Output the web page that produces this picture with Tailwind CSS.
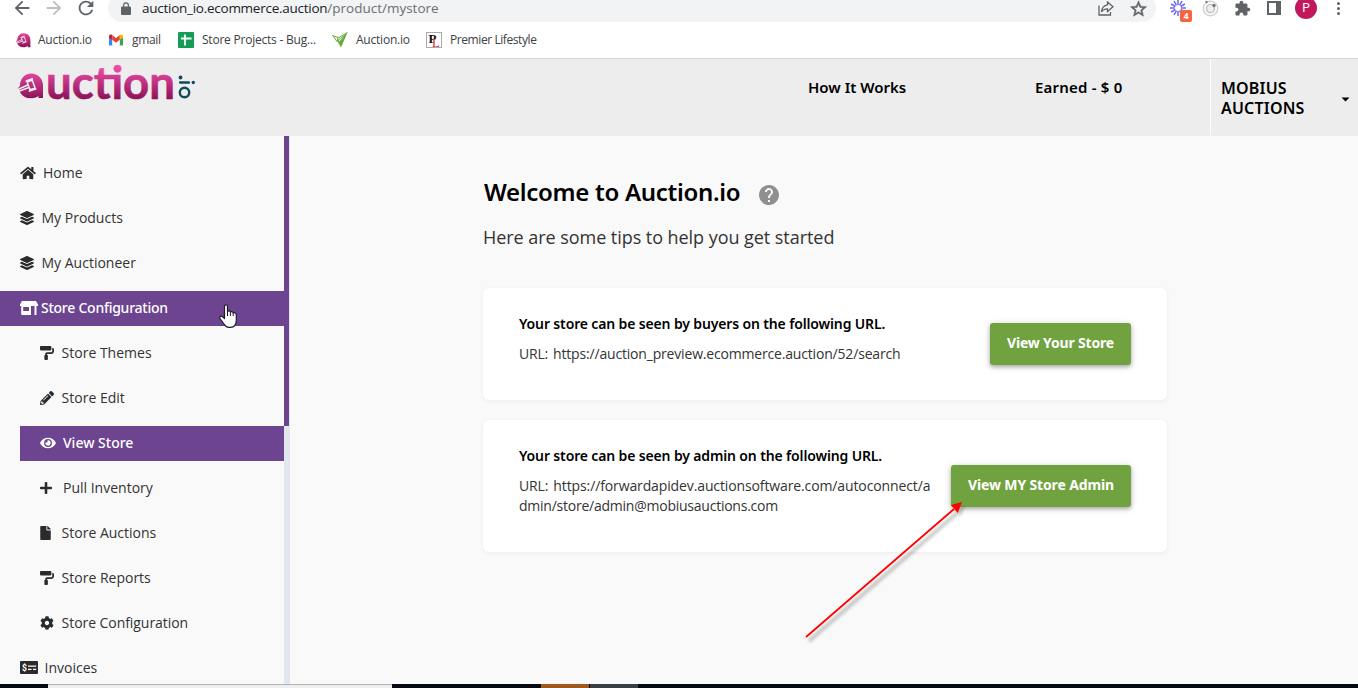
<!DOCTYPE html>
<html lang="en">
<head>
<meta charset="utf-8">
<title>Auction.io - My Store</title>
<script src="https://cdn.jsdelivr.net/npm/@tailwindcss/browser@4"></script>
</head>
<body class="relative flex h-[688px] w-[1358px] flex-col overflow-hidden bg-[#f9f9f9] font-['Open_Sans','Noto_Sans',sans-serif] text-sm text-[#333]">

<!-- shared icon shapes -->
<svg class="absolute size-0">
  <defs>
    <linearGradient id="pink" x1="0" y1="0" x2="0" y2="1"><stop offset="0" stop-color="#e2479d"/><stop offset="1" stop-color="#8c1358"/></linearGradient>
    <linearGradient id="pinkText" gradientUnits="userSpaceOnUse" x1="0" y1="66" x2="0" y2="99"><stop offset="0" stop-color="#f250ab"/><stop offset="1" stop-color="#8c1358"/></linearGradient>
  </defs>
  <symbol id="layers" viewBox="0 0 512 512"><path d="M12.41 148.02l232.94 105.67c6.8 3.09 14.49 3.09 21.29 0l232.94-105.67c16.55-7.51 16.55-32.52 0-40.03L266.65 2.31a25.607 25.607 0 0 0-21.29 0L12.41 107.98c-16.55 7.51-16.55 32.53 0 40.04zm487.18 88.28l-58.09-26.33-161.64 73.27c-7.56 3.43-15.59 5.17-23.86 5.17s-16.29-1.74-23.86-5.17L70.51 209.97l-58.1 26.33c-16.55 7.5-16.55 32.5 0 40l232.94 105.59c6.8 3.08 14.49 3.08 21.29 0L499.59 276.3c16.55-7.5 16.55-32.5 0-40zm0 127.8l-57.87-26.23-161.86 73.37c-7.56 3.43-15.59 5.17-23.86 5.17s-16.29-1.74-23.86-5.17L70.29 337.87 12.41 364.1c-16.55 7.5-16.55 32.5 0 40l232.94 105.59c6.8 3.08 14.49 3.08 21.29 0L499.59 404.1c16.55-7.5 16.55-32.5 0-40z"/></symbol>
  <symbol id="roller" viewBox="0 0 512 512"><path d="M416 128V32c0-17.67-14.33-32-32-32H32C14.33 0 0 14.33 0 32v96c0 17.67 14.33 32 32 32h352c17.67 0 32-14.33 32-32zm32-64v128c0 17.67-14.33 32-32 32H256c-35.35 0-64 28.65-64 64v32c-17.67 0-32 14.33-32 32v128c0 17.67 14.33 32 32 32h64c17.67 0 32-14.33 32-32V352c0-17.67-14.33-32-32-32v-32h160c53.02 0 96-42.98 96-96v-64c0-35.35-28.65-64-64-64z"/></symbol>
  <symbol id="mark" viewBox="0 0 28 26"><path fill="url(#pink)" d="M27 25.500H22.500V23.500C20.500 25 17.500 25.800 14.500 25.800C9 25.800 4.500 22.500 3.200 17.200L1.500 16.200L4 13.200C4 6 8.800 1 15 1C22 1 27 6 27 13Z"/><path fill="none" stroke="#ededed" stroke-width="1.500" d="M0.500 17.500L12.500 12.200M9.500 8.600L17 6M12.800 18.800L20.400 16.200M11.200 9.500L14 17.200L19 15.400L16.200 7.500ZM1.500 19.200L13 15"/></symbol>
</svg>

<!-- browser toolbar -->
<div class="h-[22px] shrink-0 bg-white">
  <div class="flex h-4 items-center">
    <div class="flex w-[108px] shrink-0 items-center pl-[11px]">
      <svg class="size-[22px] shrink-0 fill-[#5f6368]" viewBox="0 0 24 24"><path d="M20 11H7.830l5.590-5.590L12 4l-8 8 8 8 1.410-1.410L7.830 13H20v-2z"/></svg>
      <svg class="ml-2.5 size-[22px] shrink-0 -scale-x-100 fill-[#bdbfc1]" viewBox="0 0 24 24"><path d="M20 11H7.830l5.590-5.590L12 4l-8 8 8 8 1.410-1.410L7.830 13H20v-2z"/></svg>
      <svg class="ml-2.5 size-[22px] shrink-0 fill-[#5f6368]" viewBox="0 0 24 24"><path d="M17.650 6.350C16.200 4.900 14.210 4 12 4c-4.420 0-7.990 3.580-7.990 8s3.570 8 7.990 8c3.730 0 6.840-2.550 7.730-6h-2.080c-.82 2.330-3.040 4-5.650 4-3.310 0-6-2.690-6-6s2.690-6 6-6c1.660 0 3.140.69 4.220 1.780L13 11h7V4l-2.350 2.350z"/></svg>
    </div>
    <div class="flex h-7 w-[1048px] shrink-0 items-center rounded-full bg-[#f1f3f4] pr-0.5 pl-[13px]">
      <svg class="h-[13px] w-[10px] fill-[#5f6368]" viewBox="0 0 10 13"><path fill-rule="evenodd" d="M1 4.500H2V3.200a3 3 0 0 1 6 0V4.500H9a1 1 0 0 1 1 1V12a1 1 0 0 1-1 1H1a1 1 0 0 1-1-1V5.500a1 1 0 0 1 1-1zM3.200 4.500H6.800V3.200a1.800 1.800 0 0 0-3.600 0z"/></svg>
      <div class="ml-[11px] flex grow items-center pt-0.5 text-[13.500px] text-[#202124]"><span class="tracking-[-0.260px]">auction_io.ecommerce.auction</span><span class="tracking-[0px] text-[#6b6f73]">/product/mystore</span></div>
      <div class="flex w-8 justify-center"><svg class="h-[15px] w-4 fill-none stroke-[#5f6368] stroke-[1.300]" viewBox="0 0 16 15"><path d="M1 4.500V14H12.500V11M9.500 1L15 5.800L9.500 10.500V7.800C6.500 7.800 4.800 8.800 3.500 11C3.800 7 6 4.300 9.500 3.800Z"/></svg></div>
      <div class="flex w-8 justify-center"><svg class="size-[17px] fill-[#5f6368] stroke-[#5f6368] stroke-[0.600]" viewBox="1.500 1 21 21"><path d="M22 9.240l-7.190-.62L12 2 9.190 8.630 2 9.240l5.460 4.730L5.820 21 12 17.270 18.180 21l-1.630-7.030L22 9.240zM12 15.400l-3.760 2.270 1-4.280-3.320-2.880 4.380-.38L12 6.100l1.710 4.040 4.380.38-3.320 2.880 1 4.280L12 15.400z"/></svg></div>
    </div>
    <div class="ml-1.5 flex items-center">
      <div class="relative flex w-8 justify-center">
        <svg class="size-4 stroke-[#6b67f2] stroke-[1.500]" viewBox="-8 -8 16 16"><path d="M0-3V-8M0 3V8M-3 0H-8M3 0H8M2.600-1.500L6.900-4M-2.600-1.500L-6.900-4M-2.600 1.500L-6.900 4M2.600 1.500L6.900 4M1.500-2.600L4-6.900M-1.500-2.600L-4-6.900M-1.500 2.600L-4 6.900M1.500 2.600L4 6.900"/></svg>
        <span class="absolute top-[10px] left-[18px] flex h-3 w-3 items-center justify-center rounded-[2px] bg-[#fb6340] text-[9px] font-bold text-white">4</span>
      </div>
      <div class="flex w-8 justify-center"><svg class="size-[17px]" viewBox="0 0 17 17"><circle cx="8.500" cy="8.500" r="7.300" fill="#f7f7f7" stroke="#cfcfcf" stroke-width="1.200"/><circle cx="8.500" cy="8.500" r="4" fill="#eee" stroke="#bbb" stroke-width="1.200"/><circle cx="12" cy="5.500" r="1.700" fill="#777"/><circle cx="4.500" cy="2" r="1.300" fill="#888"/></svg></div>
      <div class="flex w-8 justify-center"><svg class="size-[17px] fill-[#5f6368]" viewBox="0 0 24 24"><path d="M20.500 11H19V7c0-1.100-.9-2-2-2h-4V3.500C13 2.120 11.880 1 10.500 1S8 2.120 8 3.500V5H4c-1.100 0-1.990.9-1.990 2v3.800H3.500c1.490 0 2.700 1.210 2.700 2.700s-1.210 2.700-2.700 2.700H2V20c0 1.100.9 2 2 2h3.800v-1.500c0-1.490 1.210-2.700 2.700-2.700 1.490 0 2.700 1.210 2.700 2.700V22H17c1.100 0 2-.9 2-2v-4h1.500c1.380 0 2.500-1.120 2.500-2.500S21.880 11 20.500 11z"/></svg></div>
      <div class="flex w-8 justify-center"><div class="h-[14px] w-[14px] border-2 border-r-[5px] border-[#5f6368]"></div></div>
      <div class="flex w-8 justify-center"><div class="flex size-[22px] items-center justify-center rounded-full bg-[#c2185b] font-['Roboto',sans-serif] text-xs text-white">P</div></div>
      <div class="flex w-8 flex-col items-center gap-[2px]"><i class="size-[3px] rounded-full bg-[#5f6368]"></i><i class="size-[3px] rounded-full bg-[#5f6368]"></i><i class="size-[3px] rounded-full bg-[#5f6368]"></i></div>
    </div>
  </div>
</div>

<!-- bookmarks bar -->
<div class="flex h-9 shrink-0 items-center bg-white pl-[15px] text-xs tracking-[-0.220px] whitespace-nowrap text-[#3c4043]">
  <div class="flex w-[93px] items-center gap-[7px]"><svg class="size-4 shrink-0"><use href="#mark"/></svg>Auction.io</div>
  <div class="flex w-[70px] items-center gap-2"><svg class="h-[12px] w-4 shrink-0" viewBox="0 0 16 12"><path fill="#4285f4" d="M1 2V11.500H4.200V5Z"/><path fill="#34a853" d="M15 2V11.500H11.800V5Z"/><path fill="#c5221f" d="M1 2.500C1 .8 2.800 0 4.200 1.100V5.800L1 3.400Z"/><path fill="#ea4335" d="M4.200 1.100L8 4L11.800 1.100V5.800L8 8.700L4.200 5.800Z"/><path fill="#fbbc04" d="M15 2.500C15 .8 13.200 0 11.800 1.100V5.800L15 3.400Z"/></svg><span class="tracking-[-0.350px]">gmail</span></div>
  <div class="flex w-[154px] items-center gap-2"><svg class="size-4 shrink-0" viewBox="0 0 16 16"><rect width="16" height="16" rx="1" fill="#159d58"/><path d="M3 6.500H13.500M7 2.500V13.500" stroke="#fff" stroke-width="1.800"/></svg>Store Projects - Bug...</div>
  <div class="flex w-[94px] items-center gap-2"><svg class="size-4 shrink-0" viewBox="0 0 16 16"><path fill="#6aaa3a" d="M15.500.5L9 15.500L5 8.500Z"/><path fill="#fff" d="M12 4.500L6.600 8.300L7.400 9.300Z"/><path fill="none" stroke="#6aaa3a" stroke-width="1" d="M.5 3.500L6 5.500L5 9.500L.8 3.700M6 6L15.500.5"/></svg>Auction.io</div>
  <div class="flex items-center gap-2 tracking-[-0.420px]"><svg class="size-4 shrink-0" viewBox="0 0 16 16"><rect x=".5" y=".5" width="15" height="15" fill="#fff" stroke="#aaa"/><text x="2.500" y="11" font-family="Liberation Serif" font-weight="700" font-size="13" fill="#111">P</text><text x="6" y="14.500" font-family="Liberation Serif" font-size="12.500" fill="#d8222c">L</text></svg>Premier Lifestyle</div>
</div>

<!-- site header -->
<header class="flex h-[78px] shrink-0 border-t border-[#d5d6d8] bg-[#ededed] font-['Noto_Sans',sans-serif] font-semibold text-black">
  <svg class="h-[50px] w-[200px] shrink-0 overflow-visible" viewBox="0 59 200 50">
    <use href="#mark" x="16" y="72.500" width="28" height="26"/>
    <text x="46" y="98.500" font-family="Lato" font-weight="700" font-size="45" textLength="129" lengthAdjust="spacingAndGlyphs" fill="url(#pinkText)" stroke="url(#pinkText)" stroke-width=".6">uction</text>
    <g fill="#0f4a60"><circle cx="180.500" cy="77.500" r="1.900"/><rect x="179" y="81.200" width="11" height="2.500" rx="1"/><circle cx="193.300" cy="82.500" r="1.700"/></g>
    <circle cx="184.500" cy="92.500" r="4.700" fill="none" stroke="#0f4a60" stroke-width="2.400"/>
  </svg>
  <div class="ml-[608px] w-[227px] pt-[18px] text-[15px] leading-5">How It Works</div>
  <div class="w-[175px] pt-[18px] text-[15px] leading-5 tracking-[0.200px]">Earned - $ 0</div>
  <div class="flex h-[76px] grow items-center border-l border-white pt-0.5 pl-[10px] text-base leading-5">
    <span class="w-[120px] tracking-[0.200px]">MOBIUS AUCTIONS</span>
    <svg class="mt-[3px] h-[5px] w-[9px]" viewBox="0 0 9 5"><path d="M.5 .5H8.500L4.500 4.500Z"/></svg>
  </div>
</header>

<div class="flex h-[548px] shrink-0">
  <!-- sidebar -->
  <nav class="flex w-[284px] shrink-0 flex-col gap-2.5 overflow-hidden pt-[20px] whitespace-nowrap">
    <a class="flex h-[35px] shrink-0 items-center pb-0.5 pl-5"><svg class="mr-[7px] h-[14px] w-4 fill-[#2b2b2b]" viewBox="0 0 576 512"><path d="M280.370 148.260L96 300.110V464a16 16 0 0 0 16 16l112.060-.29a16 16 0 0 0 15.920-16V368a16 16 0 0 1 16-16h64a16 16 0 0 1 16 16v95.640a16 16 0 0 0 16 16.050L464 480a16 16 0 0 0 16-16V300L295.670 148.260a12.190 12.190 0 0 0-15.300 0zM571.600 251.470L488 182.560V44.050a12 12 0 0 0-12-12h-56a12 12 0 0 0-12 12v72.610L318.470 43a48 48 0 0 0-61 0L4.340 251.470a12 12 0 0 0-1.600 16.900l25.500 31A12 12 0 0 0 45.150 301l235.220-193.740a12.190 12.190 0 0 1 15.300 0L530.900 301a12 12 0 0 0 16.900-1.600l25.500-31a12 12 0 0 0-1.700-16.930z"/></svg>Home</a>
    <a class="flex h-[35px] shrink-0 items-center pb-0.5 pl-5"><svg class="mr-[7.500px] size-[14px] fill-[#2b2b2b]"><use href="#layers"/></svg>My Products</a>
    <a class="flex h-[35px] shrink-0 items-center pb-0.5 pl-5"><svg class="mr-[7.500px] size-[14px] fill-[#2b2b2b]"><use href="#layers"/></svg>My Auctioneer</a>
    <a class="flex h-[35px] shrink-0 items-center bg-[#6c4490] pb-0.5 pl-5 font-['Noto_Sans',sans-serif] font-medium tracking-[-0.250px] text-white"><svg class="mr-[3px] h-[14px] w-[18px] fill-white" viewBox="0 0 18 14"><path fill-rule="evenodd" d="M2 0H16L18 3.500V5H0V3.500ZM1.200 5H11V14H2.200Q1.200 14 1.200 13ZM3.200 6V10H9V6ZM14.500 5H16.500V14H14.500Z"/></svg>Store Configuration</a>
    <a class="flex h-[35px] shrink-0 items-center pb-0.5 pl-10"><svg class="mr-[7.600px] size-[14px] fill-[#2b2b2b]"><use href="#roller"/></svg>Store Themes</a>
    <a class="flex h-[35px] shrink-0 items-center pb-0.5 pl-10"><svg class="mr-[7.600px] size-[14px] fill-[#2b2b2b]" viewBox="0 0 512 512"><path d="M497.900 142.100l-46.100 46.100c-4.700 4.700-12.300 4.700-17 0l-111-111c-4.700-4.700-4.700-12.300 0-17l46.100-46.100c18.700-18.700 49.100-18.700 67.900 0l60.100 60.100c18.800 18.700 18.800 49.100 0 67.900zM284.200 99.800L21.600 362.400.4 483.900c-2.900 16.400 11.400 30.600 27.800 27.800l121.500-21.300 262.600-262.600c4.700-4.700 4.700-12.300 0-17l-111-111c-4.800-4.700-12.400-4.700-17.100 0zM124.100 339.900c-5.500-5.500-5.500-14.300 0-19.800l154-154c5.500-5.500 14.300-5.500 19.800 0s5.500 14.300 0 19.800l-154 154c-5.500 5.500-14.300 5.500-19.800 0zM88 424h48v36.300l-64.500 11.300-31.100-31.100L51.700 376H88v48z"/></svg>Store Edit</a>
    <a class="ml-5 flex h-[35px] shrink-0 items-center bg-[#6c4490] pb-0.5 pl-5 font-['Noto_Sans',sans-serif] font-medium text-white"><svg class="mr-[7px] h-[14px] w-4 fill-white" viewBox="0 0 576 512"><path d="M572.520 241.400C518.290 135.590 410.930 64 288 64S57.680 135.640 3.480 241.410a32.350 32.350 0 0 0 0 29.190C57.710 376.410 165.070 448 288 448s230.320-71.640 284.520-177.410a32.350 32.350 0 0 0 0-29.190zM288 400a144 144 0 1 1 144-144 143.930 143.930 0 0 1-144 144zm0-240a95.310 95.310 0 0 0-25.310 3.790 47.850 47.850 0 0 1-66.900 66.900A95.780 95.780 0 1 0 288 160z"/></svg>View Store</a>
    <a class="flex h-[35px] shrink-0 items-center pb-0.5 pl-10"><svg class="mr-[11px] h-[14px] w-3 fill-[#2b2b2b]" viewBox="0 0 448 512"><path d="M416 208H272V64c0-17.670-14.330-32-32-32h-32c-17.670 0-32 14.330-32 32v144H32c-17.670 0-32 14.330-32 32v32c0 17.670 14.330 32 32 32h144v144c0 17.670 14.330 32 32 32h32c17.670 0 32-14.330 32-32V304h144c17.670 0 32-14.330 32-32v-32c0-17.670-14.330-32-32-32z"/></svg>Pull Inventory</a>
    <a class="flex h-[35px] shrink-0 items-center pb-0.5 pl-10"><svg class="mr-[10.600px] h-[14px] w-[11px] fill-[#2b2b2b]" viewBox="0 0 384 512"><path d="M224 136V0H24C10.700 0 0 10.700 0 24v464c0 13.300 10.700 24 24 24h336c13.300 0 24-10.700 24-24V160H248c-13.200 0-24-10.800-24-24zm160-14.100v6.100H256V0h6.100c6.400 0 12.500 2.500 17 7l97.900 98c4.500 4.500 7 10.600 7 16.900z"/></svg>Store Auctions</a>
    <a class="flex h-[35px] shrink-0 items-center pb-0.5 pl-10"><svg class="mr-[7.600px] size-[14px] fill-[#2b2b2b]"><use href="#roller"/></svg>Store Reports</a>
    <a class="flex h-[35px] shrink-0 items-center pb-0.5 pl-10 tracking-[-0.060px]"><svg class="mr-[7.600px] size-[14px] fill-[#2b2b2b]" viewBox="0 0 512 512"><path d="M487.400 315.700l-42.600-24.600c4.300-23.200 4.300-47 0-70.200l42.600-24.600c4.900-2.800 7.100-8.600 5.500-14-11.100-35.600-30-67.800-54.700-94.600-3.800-4.100-10-5.100-14.800-2.300L380.800 110c-17.900-15.400-38.500-27.300-60.800-35.100V25.800c0-5.600-3.900-10.500-9.400-11.700-36.700-8.200-74.300-7.800-109.200 0-5.500 1.200-9.400 6.100-9.400 11.700V75c-22.200 7.900-42.800 19.800-60.800 35.100L88.700 85.500c-4.900-2.800-11-1.900-14.800 2.300-24.700 26.700-43.600 58.900-54.700 94.600-1.700 5.400.6 11.200 5.500 14L67.300 221c-4.300 23.200-4.300 47 0 70.200l-42.600 24.600c-4.900 2.800-7.100 8.600-5.500 14 11.100 35.600 30 67.800 54.700 94.600 3.800 4.100 10 5.100 14.800 2.300l42.600-24.600c17.900 15.400 38.500 27.300 60.800 35.100v49.200c0 5.600 3.900 10.500 9.400 11.700 36.700 8.200 74.300 7.800 109.200 0 5.500-1.200 9.400-6.100 9.400-11.700v-49.200c22.200-7.900 42.800-19.800 60.800-35.100l42.600 24.600c4.900 2.800 11 1.900 14.800-2.300 24.700-26.700 43.600-58.900 54.700-94.600 1.500-5.500-.7-11.300-5.600-14.100zM256 336c-44.100 0-80-35.900-80-80s35.900-80 80-80 80 35.900 80 80-35.900 80-80 80z"/></svg>Store Configuration</a>
    <a class="flex h-[35px] shrink-0 items-center pb-0.5 pl-5"><svg class="mr-[6.600px] h-[13px] w-[18px]" viewBox="0 0 18 13"><rect width="18" height="13" rx="1" fill="#2b2b2b"/><text x="2" y="9.500" font-family="Roboto" font-weight="700" font-size="8.500" fill="#fff">$</text><path d="M8 5.200H16.200M8 8.300H11.500M13 8.300H16.200" stroke="#fff" stroke-width="1.200"/></svg>Invoices</a>
  </nav>
  <div class="w-1.5 shrink-0 bg-[#e2e6ef]"><div class="h-[290px] w-[5px] bg-[#6c4490]"></div></div>

  <!-- content -->
  <main class="w-[877px] shrink-0 pt-[40px] pl-[193px]">
    <div class="flex h-8 items-center pl-px">
      <h1 class="font-['Noto_Sans',sans-serif] text-2xl font-semibold tracking-[-0.300px] text-black">Welcome to Auction.io</h1>
      <svg class="mt-[6px] ml-[17px] size-6 fill-[#8f8f8f]" viewBox="0 0 24 24"><path d="M12 2C6.480 2 2 6.480 2 12s4.480 10 10 10 10-4.480 10-10S17.520 2 12 2zm1 17h-2v-2h2v2zm2.070-7.750l-.9.920C13.450 12.900 13 13.500 13 15h-2v-.5c0-1.100.45-2.100 1.170-2.830l1.240-1.260c.37-.36.59-.86.59-1.410 0-1.100-.9-2-2-2s-2 .9-2 2H8c0-2.210 1.790-4 4-4s4 1.790 4 4c0 .88-.36 1.680-.93 2.250z"/></svg>
    </div>
    <p class="mt-[15px] text-lg leading-7 tracking-[-0.050px]">Here are some tips to help you get started</p>
    <section class="mt-[37px] flex h-[112px] items-center rounded-md bg-white px-9 shadow-[0_1px_4px_rgba(0,0,0,0.06)]">
      <div class="h-[60px] grow leading-5">
        <h2 class="mb-2.5 font-['Noto_Sans',sans-serif] font-semibold tracking-[-0.140px] text-black">Your store can be seen by buyers on the following URL.</h2>
        <p class="tracking-[-0.180px] [word-spacing:1.500px]">URL: https://auction_preview.ecommerce.auction/52/search</p>
      </div>
      <button class="h-[42px] w-[141px] rounded-[3px] bg-[#70a340] pb-[2px] font-['Noto_Sans',sans-serif] font-bold tracking-[-0.190px] text-white shadow-[0_2px_4px_rgba(0,0,0,0.3),0_1px_10px_rgba(0,0,0,0.1)]">View Your Store</button>
    </section>
    <section class="mt-5 flex h-[132px] items-center rounded-md bg-white px-9 shadow-[0_1px_4px_rgba(0,0,0,0.06)]">
      <div class="h-20 w-[432px] leading-5 whitespace-nowrap">
        <h2 class="mb-2.5 font-['Noto_Sans',sans-serif] font-semibold tracking-[-0.140px] text-black">Your store can be seen by admin on the following URL.</h2>
        <p class="tracking-[-0.120px] [word-spacing:1.500px]">URL: https://forwardapidev.auctionsoftware.com/autoconnect/a<br><span class="tracking-[-0.240px]">dmin/store/admin@mobiusauctions.com</span></p>
      </div>
      <button class="h-[42px] w-[180px] rounded-[3px] bg-[#70a340] pb-[2px] font-['Noto_Sans',sans-serif] font-bold tracking-[-0.140px] whitespace-nowrap text-white shadow-[0_2px_4px_rgba(0,0,0,0.3),0_1px_10px_rgba(0,0,0,0.1)]">View MY Store Admin</button>
    </section>
  </main>
</div>

<!-- taskbar edge -->
<div class="flex h-1 shrink-0 bg-[#050a12]">
  <div class="ml-12 w-[344px] border-t border-[#b0b0b0] bg-[#f0f0f0]"></div>
  <div class="ml-[149px] w-12 bg-[#a0591f]"></div>
  <div class="ml-px w-12 bg-[#3a3f44]"></div>
</div>

<!-- annotation arrow -->
<svg class="absolute top-[490px] left-[790px] h-[160px] w-[190px]" viewBox="790 490 190 160">
  <g class="opacity-20 blur-[1.500px]" transform="translate(3 4)"><path d="M806 637L954 509" stroke="#000" stroke-width="4"/><path d="M962 502L951.500 505.500L957.500 512.500Z"/></g>
  <path d="M806 637L954 509" stroke="#f00" stroke-width="1.700"/><path fill="#f00" d="M962 502L951 505L957.700 513Z"/>
</svg>

<!-- pointer -->
<svg class="absolute top-[304px] left-[219px] h-[25px] w-[19px]" viewBox="0 0 19 25"><path fill="#fff" stroke="#1c1c2c" stroke-width="1.200" stroke-linejoin="round" d="M5.500 14.500V2.500C5.500 .3 8.500 .3 8.500 2.500V7.500C9.500 6.300 11.300 6.800 11.500 8C12.500 7.200 14 7.600 14.200 8.900C15.500 8.300 17.300 9 17.300 10.800V16C17.300 20 15.500 23.300 11.500 23.300H10C7.500 23.300 6 22 5 20L1 14.500C.2 12.500 2.300 11.500 3.500 12.700Z"/><path fill="none" stroke="#1c1c2c" d="M8.500 7.500V12M11.400 8V12M14.200 9V12"/></svg>
</body>
</html>
